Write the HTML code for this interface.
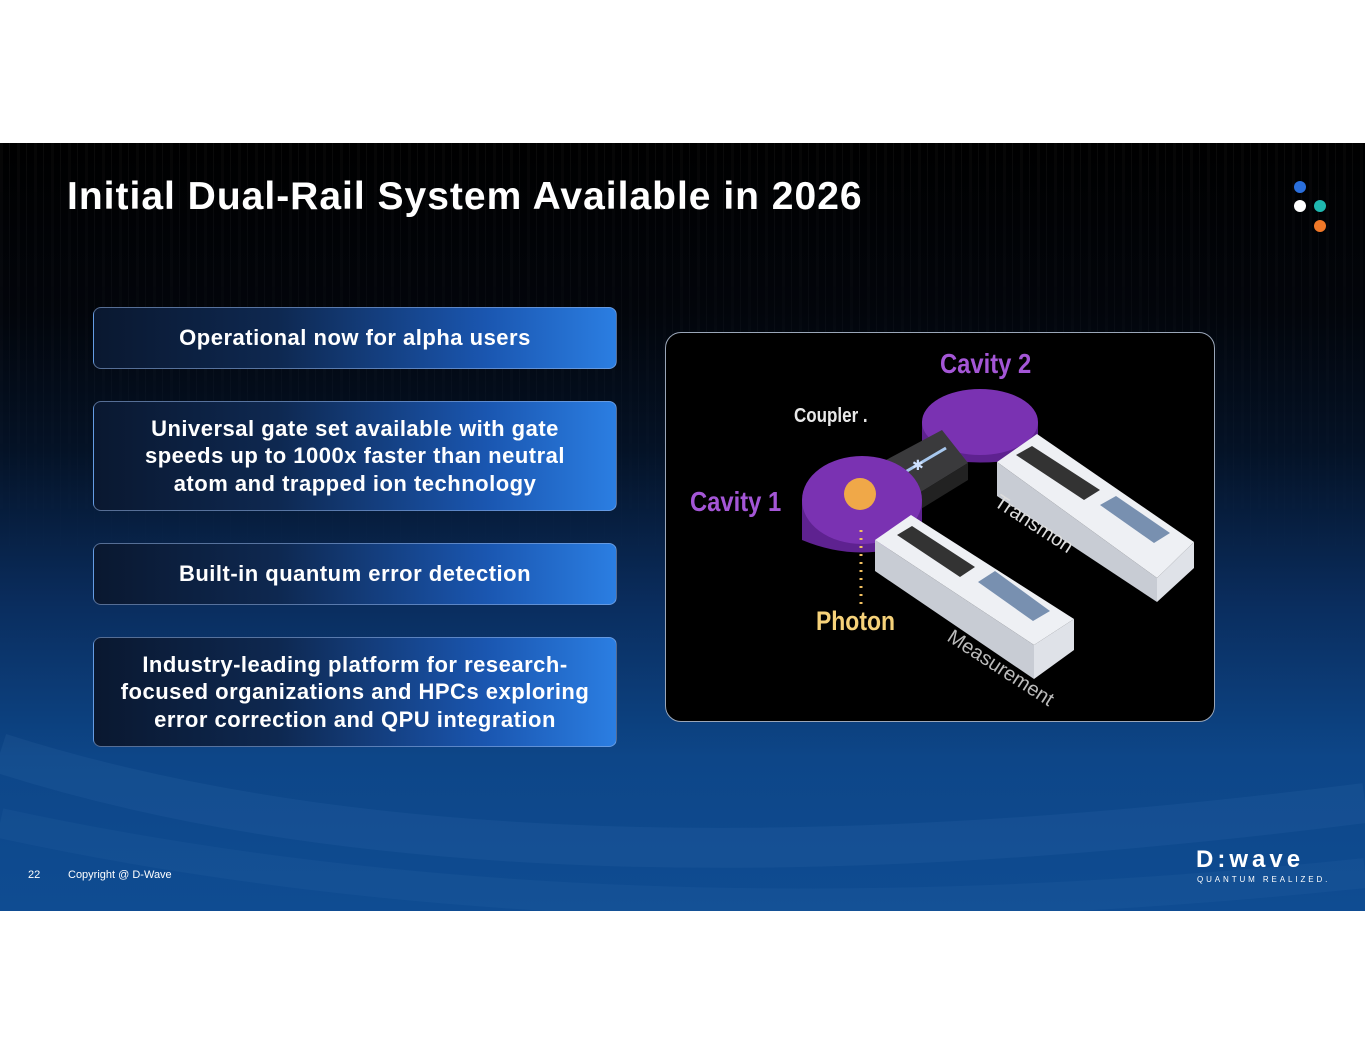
<!DOCTYPE html>
<html><head><meta charset="utf-8"><style>
*{margin:0;padding:0;box-sizing:border-box}
body{width:1365px;height:1055px;background:#fff;position:relative;overflow:hidden;font-family:"Liberation Sans",sans-serif}
#slide{position:absolute;left:0;top:143px;width:1365px;height:768px;overflow:hidden;
background:linear-gradient(180deg,#000 0%,#02050b 22%,#041226 40%,#0a2d5e 60%,#0d4688 80%,#0f4c92 100%)}
#streaks{position:absolute;left:0;top:0;width:100%;height:60%;
background:repeating-linear-gradient(90deg,rgba(255,255,255,0.025) 0 3px,rgba(0,0,0,0) 3px 9px,rgba(255,255,255,0.04) 9px 10px,rgba(0,0,0,0) 10px 17px);
-webkit-mask-image:linear-gradient(180deg,#000 0%,rgba(0,0,0,.6) 50%,transparent 100%)}
h1{position:absolute;left:67px;top:32px;color:#fff;font-size:39px;font-weight:bold;letter-spacing:1px;white-space:nowrap}
.box{position:absolute;left:93px;width:524px;border:1px solid rgba(150,180,230,0.55);border-radius:8px;
background:linear-gradient(90deg,#0a1830 0%,#0e2850 35%,#1a56b0 75%,#2b7ee2 100%);
color:#fff;font-weight:bold;font-size:22px;line-height:27.5px;text-align:center;display:flex;align-items:center;justify-content:center;padding:0 10px;letter-spacing:0.5px;white-space:nowrap}
.dot{position:absolute;width:12px;height:12px;border-radius:50%}
#img{position:absolute;left:665px;top:189px;width:550px;height:390px;background:#000;border:1px solid #9aa6b8;border-radius:16px;overflow:hidden}
.ft{position:absolute;color:#fff;font-size:11px}
</style></head><body>
<div id="slide">
<div id="streaks"></div>
<svg style="position:absolute;left:0;top:520px" width="1365" height="248"><path d="M0 90 Q500 250 1365 140" fill="none" stroke="rgba(120,170,230,0.07)" stroke-width="40"/><path d="M0 160 Q600 290 1365 210" fill="none" stroke="rgba(120,170,230,0.05)" stroke-width="30"/></svg>
<h1>Initial Dual-Rail System Available in 2026</h1>
<div class="dot" style="left:1294px;top:38px;background:#2a6fdc"></div>
<div class="dot" style="left:1294px;top:57px;background:#fff"></div>
<div class="dot" style="left:1314px;top:57px;background:#1fb8b0"></div>
<div class="dot" style="left:1314px;top:77px;background:#f07828"></div>

<div class="box" style="top:164px;height:62px">Operational now for alpha users</div>
<div class="box" style="top:258px;height:110px">Universal gate set available with gate<br>speeds up to 1000x faster than neutral<br>atom and trapped ion technology</div>
<div class="box" style="top:400px;height:62px">Built-in quantum error detection</div>
<div class="box" style="top:494px;height:110px">Industry-leading platform for research-<br>focused organizations and HPCs exploring<br>error correction and QPU integration</div>

<div id="img">
<svg width="550" height="390" viewBox="665 332 550 390" style="position:absolute;left:-1px;top:-1px">
 <path d="M922 422 L922 455 Q980 470 1038 455 L1038 422 Z" fill="#5e2290"/>
 <ellipse cx="980" cy="422" rx="58" ry="33" fill="#7a32b2"/>
 <polygon points="873,467 942,430 968,463 903,503" fill="#3a3a3c"/>
 <polygon points="903,503 968,463 968,480 903,520" fill="#222"/>
 <line x1="895" y1="478" x2="946" y2="448" stroke="#a8c8ee" stroke-width="3"/>
 <text x="912" y="470" fill="#cfe2ff" font-size="14">✱</text>
 <path d="M802 500 L802 540 Q862 565 922 540 L922 500 Z" fill="#5e2290"/>
 <ellipse cx="862" cy="500" rx="60" ry="44" fill="#7a32b2"/>
 <circle cx="860" cy="494" r="16" fill="#f0a848"/>
 <line x1="861" y1="530" x2="861" y2="608" stroke="#f2c060" stroke-width="3" stroke-dasharray="2 6"/>
 <polygon points="997,462 1037,434 1194,542 1157,578" fill="#eef0f4"/>
 <polygon points="997,462 1157,578 1157,602 997,496" fill="#c8ccd4"/>
 <polygon points="1157,578 1194,542 1194,568 1157,602" fill="#dfe2e8"/>
 <polygon points="1016,455 1032,446 1100,490 1084,500" fill="#333"/>
 <polygon points="1100,505 1116,496 1170,533 1154,543" fill="#7890b0"/>
 <polygon points="875,540 911,515 1074,619 1034,645" fill="#eef0f4"/>
 <polygon points="875,540 1034,645 1034,679 875,571" fill="#c8ccd4"/>
 <polygon points="1034,645 1074,619 1074,650 1034,679" fill="#dfe2e8"/>
 <polygon points="897,535 912,526 975,567 960,577" fill="#333"/>
 <polygon points="978,582 995,571 1050,611 1033,621" fill="#7890b0"/>
 <text x="940" y="373" fill="#a456d6" font-size="28" font-weight="bold" transform="translate(940 0) scale(0.85 1) translate(-940 0)">Cavity 2</text>
 <text x="690" y="511" fill="#a456d6" font-size="28" font-weight="bold" transform="translate(690 0) scale(0.85 1) translate(-690 0)">Cavity 1</text>
 <text x="794" y="422" fill="#e8e8e8" font-size="20" font-weight="bold" transform="translate(794 0) scale(0.85 1) translate(-794 0)">Coupler .</text>
 <text x="816" y="630" fill="#f6d27a" font-size="27" font-weight="bold" transform="translate(816 0) scale(0.85 1) translate(-816 0)">Photon</text>
 <text x="993" y="505" fill="#ddd" font-size="20" transform="rotate(33 993 505)">Transmon</text>
 <text x="946" y="640" fill="#bbb" font-size="20" transform="rotate(33 946 640)">Measurement</text>
</svg>
</div>

<div class="ft" style="left:28px;top:726px">22</div>
<div class="ft" style="left:68px;top:726px">Copyright @ D-Wave</div>
<div style="position:absolute;left:1196px;top:705px;color:#fff;font-size:24px;font-weight:bold;letter-spacing:4px;line-height:24px">D:wave</div>
<div style="position:absolute;left:1197px;top:732px;color:#fff;font-size:8px;letter-spacing:2.9px">QUANTUM REALIZED.</div>
</div>
</body></html>
